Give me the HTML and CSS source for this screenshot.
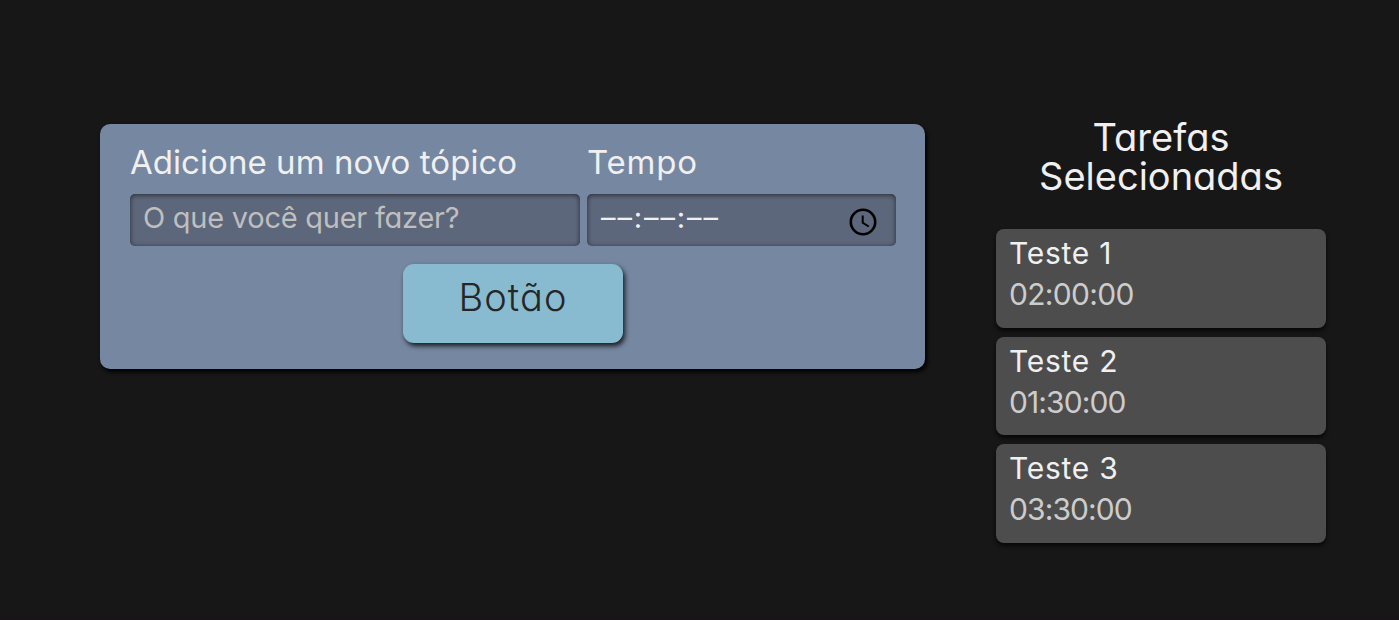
FILE: index.html
```html
<!DOCTYPE html>
<html lang="pt-BR">
<head>
<meta charset="utf-8">
<title>Tarefas</title>
<link rel="stylesheet" href="styles.css">
</head>
<body>
<main class="app">
  <form class="form">
    <div class="fields">
      <div class="field">
        <label class="label">Adicione um novo tópico</label>
        <div class="input"><span class="placeholder">O que você quer fazer?</span></div>
      </div>
      <div class="field">
        <label class="label label-time">Tempo</label>
        <div class="input">
          <span class="time-value">––:––:––</span>
          <svg class="clock" viewBox="0 0 28 28" fill="none" stroke="#000"><circle cx="14" cy="14" r="12.2" stroke-width="2.6"/><path d="M13.7 7.5v7.3l6.1 3.7" stroke-width="2"/></svg>
        </div>
      </div>
    </div>
    <button class="button" type="button">Botão</button>
  </form>
  <aside class="tasks">
    <h2 class="title">Tarefas Selecionadas</h2>
    <ul class="list">
      <li class="item"><h3 class="name">Teste 1</h3><span class="time">02:00:00</span></li>
      <li class="item"><h3 class="name">Teste 2</h3><span class="time time-narrow">01:30:00</span></li>
      <li class="item"><h3 class="name">Teste 3</h3><span class="time time-narrow">03:30:00</span></li>
    </ul>
  </aside>
</main>
</body>
</html>
```
FILE: styles.css
```css
* { box-sizing: border-box; margin: 0; padding: 0; }
body {
  height: 620px;
  overflow: hidden;
  background: #171717;
  color: #f0f0f0;
  font-family: Inter, "Open Sans", sans-serif;
  font-weight: 400;
  font-feature-settings: "cv11";
}
.app { display: flex; align-items: flex-start; gap: 71px; height: 620px; padding: 117px 73px 0 100px; border-bottom: 4px solid #191417; }
.form { width: 825px; height: 245px; margin-top: 7px; padding: 19px 29px 0 30px; border-radius: 10px; background: #7687a1; box-shadow: 2px 3px 4px #000; }
.fields { display: grid; grid-template-columns: 450px 309px; gap: 7px; }
.label { display: block; height: 51px; font-size: 33px; line-height: 39px; letter-spacing: .05px; white-space: nowrap; }
.label-time { letter-spacing: .8px; }
.input { display: flex; align-items: center; justify-content: space-between; height: 52px; padding: 0 19px 5px 13px; border-radius: 5px; background: #5d677b; box-shadow: inset 0 1px 5px rgba(0, 0, 0, .6); white-space: nowrap; }
.placeholder { color: #bfbfbf; font-size: 29px; letter-spacing: -.25px; }
.time-value { padding-left: 1px; font-size: 29px; letter-spacing: 1.9px; }
.clock { width: 28px; height: 28px; margin-top: 9px; }
.button { display: block; width: 220px; height: 79px; margin: 18px auto 0 273px; padding-bottom: 14px; border: 0; border-radius: 11px; background: #88bbd0; color: #262626; font: inherit; font-feature-settings: inherit; font-size: 38px; font-weight: 300; letter-spacing: 1.1px; box-shadow: 2px 3px 5px rgba(0, 0, 0, .8); }
.tasks { width: 330px; }
.title { height: 112px; padding: 1px 40px 0; font-size: 38px; font-weight: 400; line-height: 39px; text-align: center; }
.list { display: grid; gap: 9px; list-style: none; }
.item { height: 98.5px; padding: 4px 13px; border-radius: 8px; background: #4d4d4d; box-shadow: 0 3px 4px rgba(0, 0, 0, .7); }
.name { font-size: 30px; font-weight: 400; line-height: 41px; letter-spacing: .75px; }
.time { display: block; color: #ccc; font-size: 30px; line-height: 40px; letter-spacing: -.7px; }
.time-narrow { letter-spacing: -.9px; }
```
